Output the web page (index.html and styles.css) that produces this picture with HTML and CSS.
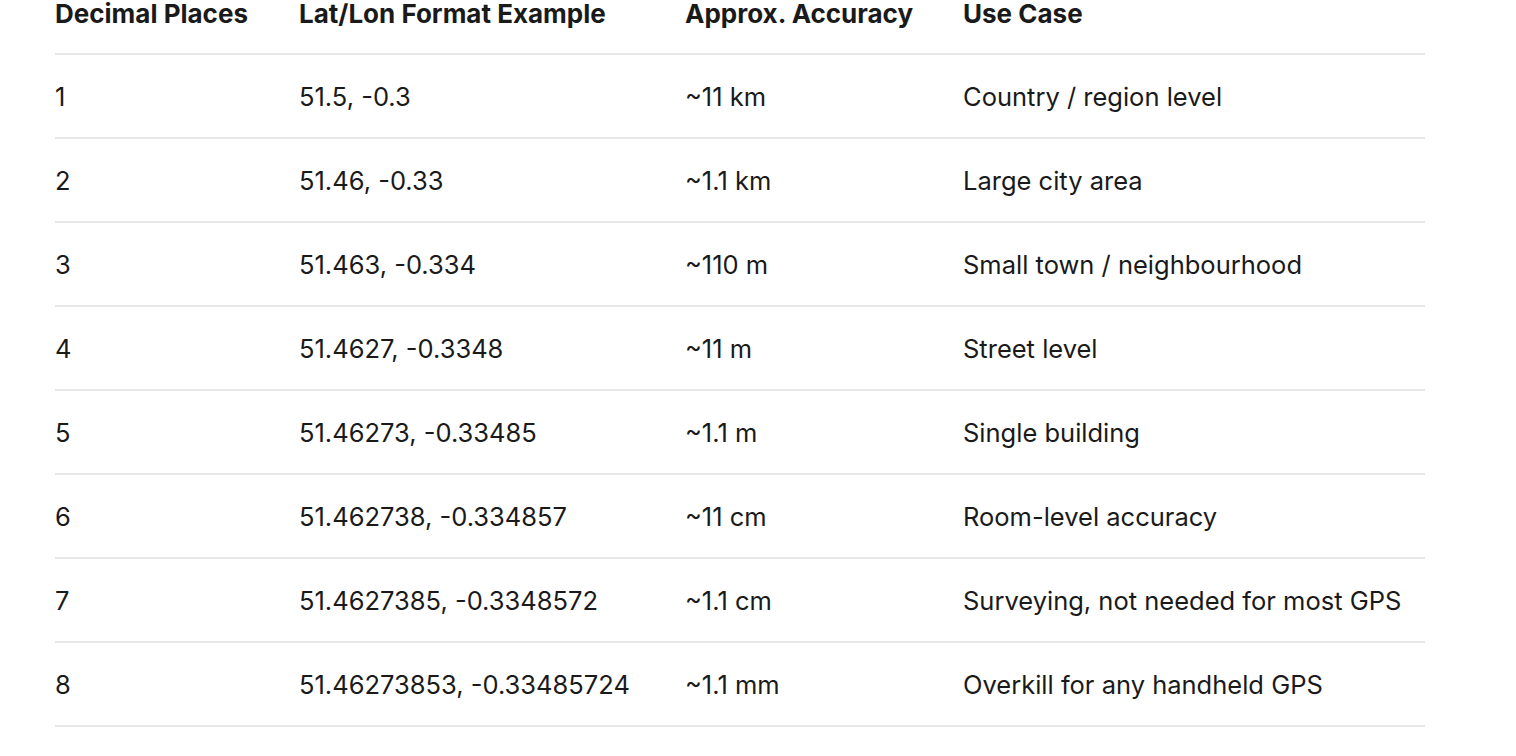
FILE: index.html
```html
<!DOCTYPE html>
<html>
<head>
<meta charset="utf-8">
<link rel="stylesheet" href="styles.css">
</head>
<body>
<div class="wrap">
<table class="acc">
<colgroup>
<col class="c1"><col class="c2"><col class="c3"><col class="c4">
</colgroup>
<thead>
<tr><th>Decimal Places</th><th>Lat/Lon Format Example</th><th>Approx. Accuracy</th><th>Use Case</th></tr>
</thead>
<tbody>
<tr><td>1</td><td>51.5, -0.3</td><td>~11 km</td><td>Country / region level</td></tr>
<tr><td>2</td><td>51.46, -0.33</td><td>~1.1 km</td><td>Large city area</td></tr>
<tr><td>3</td><td>51.463, -0.334</td><td>~110 m</td><td>Small town / neighbourhood</td></tr>
<tr><td>4</td><td>51.4627, -0.3348</td><td>~11 m</td><td>Street level</td></tr>
<tr><td>5</td><td>51.46273, -0.33485</td><td>~1.1 m</td><td>Single building</td></tr>
<tr><td>6</td><td>51.462738, -0.334857</td><td>~11 cm</td><td>Room-level accuracy</td></tr>
<tr><td>7</td><td>51.4627385, -0.3348572</td><td>~1.1 cm</td><td>Surveying, not needed for most GPS</td></tr>
<tr><td>8</td><td>51.46273853, -0.33485724</td><td>~1.1 mm</td><td>Overkill for any handheld GPS</td></tr>
</tbody>
</table>
</div>
</body>
</html>
```
FILE: styles.css
```css
html, body {
  margin: 0;
  padding: 0;
  background: #ffffff;
}
body {
  font-family: Inter, "Noto Sans", sans-serif;
  color: #1a1a1a;
  overflow: hidden;
}
.wrap {
  padding-left: 55px;
  margin-top: -29px;
}
.acc {
  border-collapse: collapse;
  table-layout: fixed;
  width: 1370px;
  font-size: 25.5px;
}
.c1 { width: 244px; }
.c2 { width: 386px; }
.c3 { width: 278px; }
.c4 { width: 462px; }
.acc th, .acc td {
  text-align: left;
  padding: 0;
  vertical-align: middle;
  border-bottom: 2px solid #e6e6e6;
  white-space: nowrap;
}
.acc th {
  font-weight: 700;
  font-size: 26px;
  height: 80px;
  padding-top: 2px;
}
.acc td {
  font-weight: 400;
  height: 81px;
  padding-top: 1px;
}
```
